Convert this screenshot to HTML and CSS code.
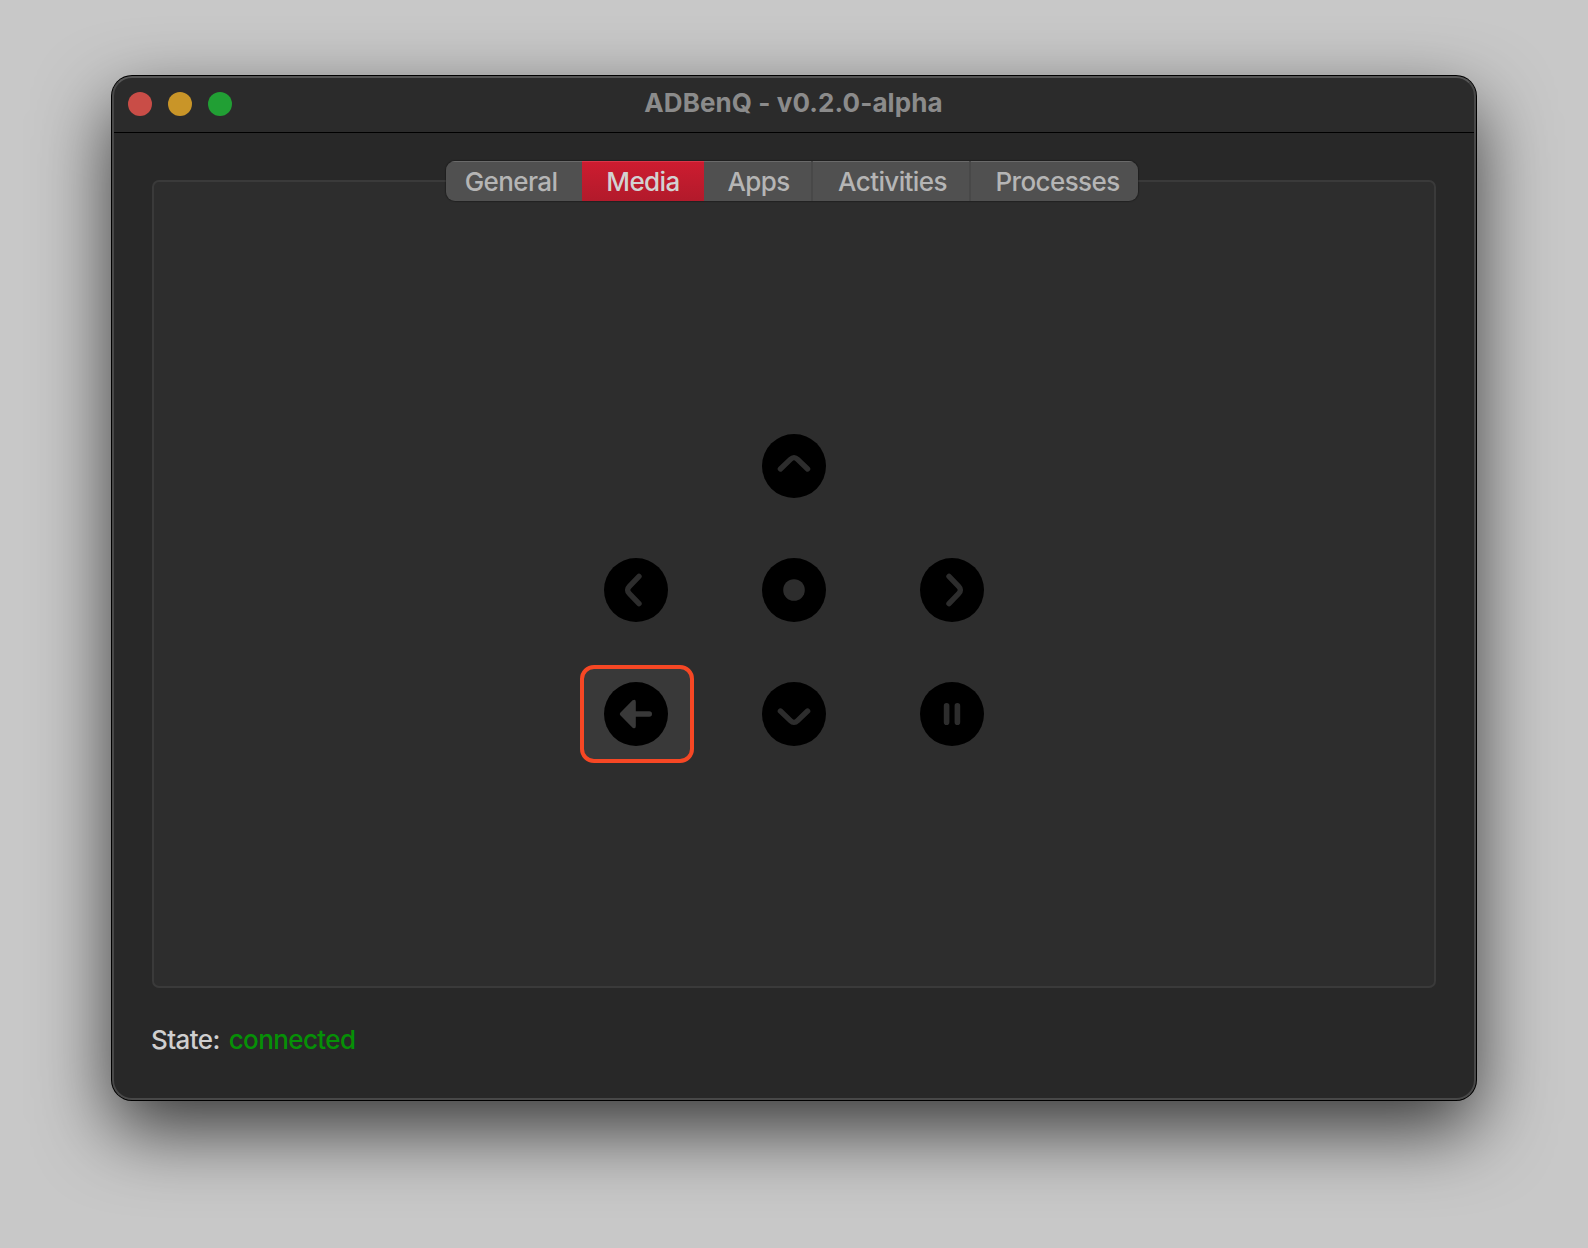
FILE: index.html
```html
<!DOCTYPE html>
<html lang="en">
<head>
<meta charset="utf-8">
<title>ADBenQ</title>
<link rel="stylesheet" href="styles.css">
</head>
<body>
<main class="window">
  <header class="titlebar">
    <div class="lights"><i class="light close"></i><i class="light minimize"></i><i class="light maximize"></i></div>
    <h1 class="title">ADBenQ - v0.2.0-alpha</h1>
  </header>
  <div class="content">
    <nav class="tabs">
      <button class="tab general">General</button>
      <button class="tab media">Media</button>
      <button class="tab apps">Apps</button>
      <button class="tab activities">Activities</button>
      <button class="tab processes">Processes</button>
    </nav>
    <section class="panel">
      <div class="remote">
        <button class="key up" aria-label="Up"><svg viewBox="0 0 64 64"><circle cx="32" cy="32" r="32"/><path class="line" d="M18.4 35 28.4 25.4Q32 21.8 35.6 25.4L45.6 35"/></svg></button>
        <button class="key left" aria-label="Left"><svg viewBox="0 0 64 64"><circle cx="32" cy="32" r="32"/><path class="line" d="M35 18.4 25.4 28.4Q21.8 32 25.4 35.6L35 45.6"/></svg></button>
        <button class="key" aria-label="Select"><svg viewBox="0 0 64 64"><circle cx="32" cy="32" r="32"/><circle class="mark" cx="32" cy="32" r="10.8"/></svg></button>
        <button class="key" aria-label="Right"><svg viewBox="0 0 64 64"><circle cx="32" cy="32" r="32"/><path class="line" d="M29 18.4 38.6 28.4Q42.2 32 38.6 35.6L29 45.6"/></svg></button>
        <button class="key focused" aria-label="Back"><svg viewBox="0 0 64 64"><circle cx="32" cy="32" r="32"/><path class="mark" d="M16.3 30.8 28.6 18.3Q31.8 16.5 31.8 20V29.2H45.2A2.8 2.8 0 0 1 45.2 34.8H31.8V44Q31.8 47.5 28.6 45.7L16.3 33.2Q15.2 32 16.3 30.8Z"/></svg></button>
        <button class="key" aria-label="Down"><svg viewBox="0 0 64 64"><circle cx="32" cy="32" r="32"/><path class="line" d="M18.4 29 28.4 38.6Q32 42.2 35.6 38.6L45.6 29"/></svg></button>
        <button class="key" aria-label="Pause"><svg viewBox="0 0 64 64"><circle cx="32" cy="32" r="32"/><path class="line pause" d="M26.6 23.8V40.2M37.4 23.8V40.2"/></svg></button>
      </div>
    </section>
    <p class="status"><span class="label">State:</span><span class="value">connected</span></p>
  </div>
</main>
</body>
</html>
```
FILE: styles.css
```css
* { box-sizing: border-box; }

body {
  margin: 0;
  height: 1248px;
  padding: 76px 112px 148px;
  overflow: hidden;
  background: #c8c8c8;
  font: 450 26px/40px Inter, "Liberation Sans", sans-serif;
  letter-spacing: -.6px;
}

button { border: 0; padding: 0; background: none; color: inherit; font: inherit; letter-spacing: inherit; }

.window {
  height: 1024px;
  border-radius: 20px;
  overflow: hidden;
  position: relative;
  background: #282828;
  box-shadow: 0 0 0 1px #000, 0 29px 74px rgba(0, 0, 0, .72);
}

/* Light rim painted over the title bar and body */
.window::after {
  content: "";
  position: absolute;
  inset: 0;
  border: 2px solid #484848;
  border-top-color: #555;
  border-radius: 20px;
  pointer-events: none;
}

.titlebar {
  display: grid;
  grid-template-columns: 1fr auto 1fr;
  align-items: center;
  height: 57px;
  padding: 0 17px 3px 16px;
  border-bottom: 1px solid #000;
  background: #2b2b2b;
}

.lights { display: flex; gap: 16px; padding-top: 3px; }
.light { width: 24px; height: 24px; border-radius: 50%; }
.close { background: #c94d47; }
.minimize { background: #c99528; }
.maximize { background: #219f34; }

.title { margin: 0; font-size: 26px; font-weight: 700; letter-spacing: .08px; color: #8b8b8b; }

.content { display: flex; flex-direction: column; padding: 28px 40px 0; }

.tabs {
  display: flex;
  align-self: flex-start;
  z-index: 1;
  width: 692px;
  height: 40px;
  margin: 0 0 -21px 294px;
  border-radius: 9px;
  overflow: hidden;
  background: #505050;
  box-shadow: 0 0 1px 1px rgba(0, 0, 0, .25);
  color: #b5b5b5;
}
.tab { padding-top: 1px; box-shadow: inset 0 1px #6a6a6a; text-align: center; }
.general { width: 136px; padding-right: 6px; }
.media { width: 122px; background: linear-gradient(#cd1c30, #b21a2b); box-shadow: inset 0 1px #d93549; color: #d2d2d2; }
.apps { width: 107px; padding-left: 2px; }
.activities { width: 158px; padding-left: 3px; border-left: 2px solid #484848; }
.processes { width: 169px; padding-left: 6px; border-left: 2px solid #484848; }

.panel {
  display: flex;
  justify-content: center;
  height: 808px;
  padding-top: 235px;
  border: 2px solid #3a3a3a;
  border-radius: 7px;
  background: #2d2d2d;
}

.remote {
  display: grid;
  grid-template-columns: repeat(3, 114px);
  grid-auto-rows: 98px;
  gap: 26px 44px;
}
.key { display: flex; align-items: center; justify-content: center; }
.up { grid-column: 2; }
.left { grid-column: 1; }
.key svg { width: 64px; height: 64px; fill: #000; }
.key .line { fill: none; stroke: #2d2d2d; stroke-width: 5.4; stroke-linecap: round; }
.key .pause { stroke-width: 5.6; }
.key .mark { fill: #2d2d2d; }
.focused { width: 114px; margin-left: 1px; padding-right: 2px; border: 4px solid #f64724; border-radius: 14px; background: #393939; }
.focused .mark { fill: #393939; }

.status { display: flex; gap: 9px; margin: 32px 0 0 -1px; }
.label { color: #cfcfcf; }
.value { color: #069006; }
```
